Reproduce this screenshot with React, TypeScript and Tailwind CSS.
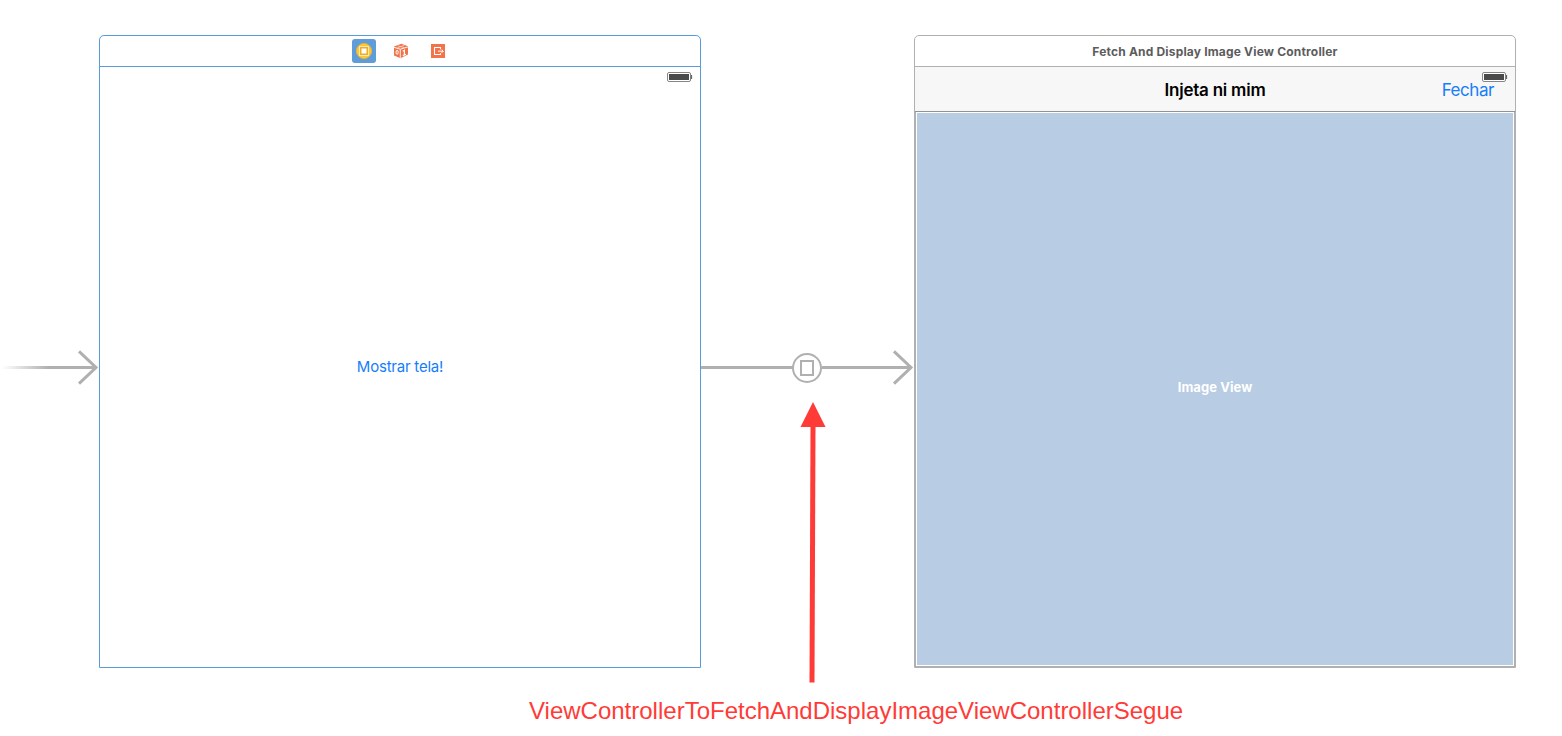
function Battery() {
  return (
    <svg width="26" height="12" viewBox="0 0 26 12" className="block">
      <rect x="0.5" y="1.5" width="23" height="9" rx="1.5" fill="#fff" stroke="#858585" />
      <rect x="2" y="3" width="20" height="6" fill="#4a4a4a" />
      <path d="M24.5 4v4" stroke="#666" strokeWidth="1.2" />
    </svg>
  );
}

function ArrowHead({ x }: { x: number }) {
  return <path d={`M${x - 17} 16.3L${x} 32.5L${x - 17} 48.7`} fill="none" stroke="#b0b0b0" strokeWidth="3" />;
}

function EntryArrow() {
  return (
    <svg width="99" height="66" viewBox="0 0 99 66" className="block">
      <defs>
        <linearGradient id="fade">
          <stop offset="0" stopColor="#b0b0b0" stopOpacity="0" />
          <stop offset="0.5" stopColor="#b0b0b0" />
        </linearGradient>
      </defs>
      <rect x="2" y="31" width="93" height="3" fill="url(#fade)" />
      <ArrowHead x={96} />
    </svg>
  );
}

function Segue() {
  return (
    <svg width="213" height="66" viewBox="0 0 213 66" className="block">
      <path d="M0 32.5H92M121 32.5H209" stroke="#b0b0b0" strokeWidth="3" />
      <circle cx="106" cy="33" r="14" fill="#fff" stroke="#b0b0b0" strokeWidth="2" />
      <rect x="100" y="26" width="12" height="14" fill="none" stroke="#b0b0b0" strokeWidth="2" />
      <ArrowHead x={210} />
    </svg>
  );
}

function ControllerIcon() {
  return (
    <svg width="24" height="24" viewBox="0 0 24 24" className="block rounded-[3px] bg-[#5e9cda]">
      <circle cx="12" cy="12" r="7.6" fill="#fdc835" stroke="#e9b13a" />
      <rect x="7.5" y="7.5" width="9" height="9" fill="#e9ae2c" stroke="#ffe9a8" />
      <rect x="9.5" y="9.5" width="5" height="5" fill="#fff" />
    </svg>
  );
}

function ResponderIcon() {
  return (
    <svg width="16" height="16" viewBox="0 0 16 16" className="block">
      <path d="M8.5 .8L15 3.2V11.5L7.5 15.2L1 12.4V3.6Z" fill="#f27349" />
      <path d="M1 4.3L7.3 6.2L15 3.9M7.3 6.2V15" fill="none" stroke="#fff" strokeWidth=".9" />
      <path d="M4.7 2.8L11 4.6M4.4 4.8L11.5 2.2" stroke="#fff" strokeWidth=".5" />
      <ellipse cx="4.1" cy="9.3" rx="1.1" ry="2" fill="none" stroke="#fff" />
      <path d="M9.8 8.2L11.4 7.3V12M9.8 12.6L13 11.2" fill="none" stroke="#fff" strokeWidth="1.2" />
    </svg>
  );
}

function ExitIcon() {
  return (
    <svg width="14" height="14" viewBox="0 0 14 14" className="block">
      <rect width="14" height="14" fill="#f27349" />
      <path d="M9.5 5.2V3.5H3.5V10.5H9.5V9.2" fill="none" stroke="#fff" strokeWidth="1.1" />
      <path d="M7 7.2H12M10.7 5.6L12.3 7.2L10.7 8.8" fill="none" stroke="#fff" strokeWidth="1" />
    </svg>
  );
}

export default function App() {
  return (
    <main className="relative flex h-[736px] w-[1562px] flex-col overflow-hidden bg-white pt-[35px] font-['Inter','Liberation_Sans',sans-serif]">
      <div className="flex h-[633px]">
        <div className="w-[99px] pt-[300px]">
          <EntryArrow />
        </div>
        <section className="flex w-[602px] flex-col rounded-t-[5px] border border-[#5b9bd8]">
          <header className="flex h-[31px] items-center border-b border-[#5b9bd8] pl-[252px]">
            <ControllerIcon />
            <div className="ml-[17px]"><ResponderIcon /></div>
            <div className="ml-[22px]"><ExitIcon /></div>
          </header>
          <div className="flex h-[18px] justify-end pt-1 pr-[7px]">
            <Battery />
          </div>
          <div className="flex flex-1 items-start justify-center pt-[272px]">
            <button className="text-[15px] leading-[20px] tracking-[-0.22px] whitespace-nowrap text-[#147efb]">Mostrar tela!</button>
          </div>
        </section>
        <div className="w-[213px] pt-[300px]">
          <Segue />
        </div>
        <section className="flex w-[602px] flex-col rounded-t-[5px] border border-[#b0b0b0]">
          <header className="flex h-[31px] items-center justify-center border-b border-[#b0b0b0] pt-[2px] text-[12px] font-bold whitespace-nowrap text-[#5c5c5c]">
            <span className="tracking-[0.18px]">Fetch And Display Image View Controller</span>
          </header>
          <nav className="relative grid h-[45px] grid-cols-[1fr_auto_1fr] items-center border-b border-[#929292] bg-[#f7f7f7] pt-[3px] text-[17px]">
            <span />
            <h1 className="font-semibold tracking-[-0.23px] whitespace-nowrap text-black">Injeta ni mim</h1>
            <button className="justify-self-end pr-[21px] tracking-[-0.45px] text-[#147efb]">Fechar</button>
            <div className="absolute top-1 right-[7px]">
              <Battery />
            </div>
          </nav>
          <div className="flex flex-1 border-x border-b border-[#b0b0b0] bg-white px-px pt-px pb-px">
            <div className="flex flex-1 items-center justify-center bg-[#b8cce3] pb-[3px]">
              <span className="text-[13px] font-bold tracking-[0.06px] text-white">Image View</span>
            </div>
          </div>
        </section>
      </div>
      <p className="mt-[28px] ml-[529px] font-['Liberation_Sans',sans-serif] text-[24px] leading-[30px] whitespace-nowrap text-[#ff3b38]">
        ViewControllerToFetchAndDisplayImageViewControllerSegue
      </p>
      <svg width="26" height="282" viewBox="0 0 26 282" className="absolute top-[402px] left-[800px]">
        <path d="M13 24L12 280.5" stroke="#ff3b38" strokeWidth="5" />
        <path d="M13 0L25.5 25H0.5Z" fill="#ff3b38" />
      </svg>
    </main>
  );
}
